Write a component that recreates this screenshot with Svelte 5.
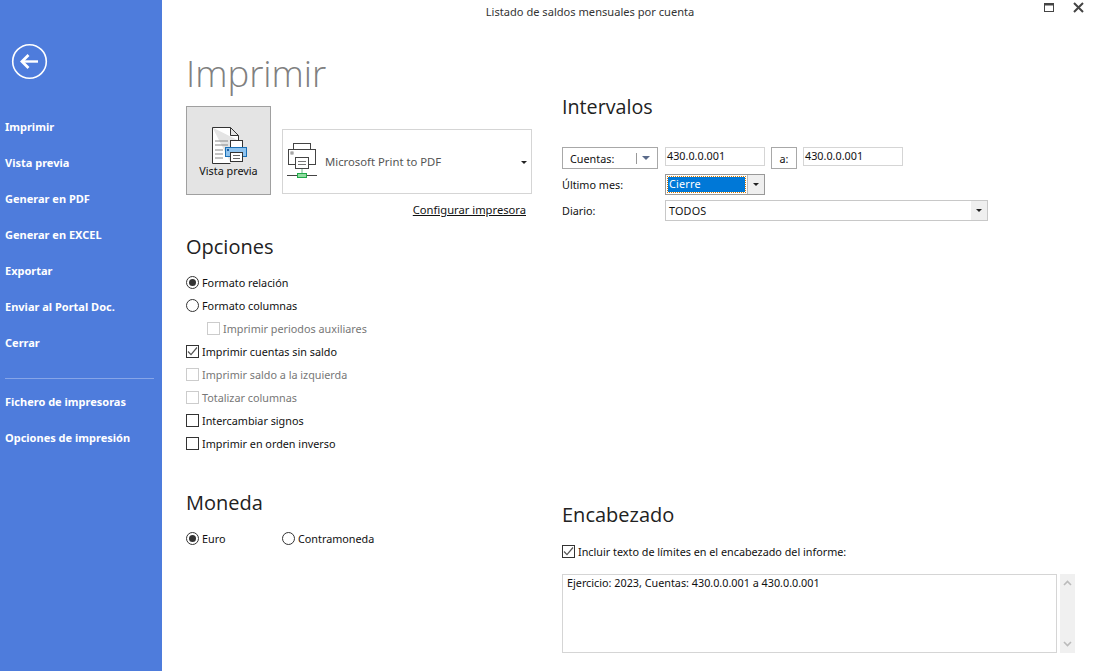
<script lang="ts">
	const menuTop = ['Imprimir', 'Vista previa', 'Generar en PDF', 'Generar en EXCEL', 'Exportar', 'Enviar al Portal Doc.', 'Cerrar'];
	const menuBottom = ['Fichero de impresoras', 'Opciones de impresión'];

	const options = [
		{ type: 'radio', label: 'Formato relación', on: true },
		{ type: 'radio', label: 'Formato columnas' },
		{ type: 'check', label: 'Imprimir periodos auxiliares', off: true, indent: true },
		{ type: 'check', label: 'Imprimir cuentas sin saldo', on: true },
		{ type: 'check', label: 'Imprimir saldo a la izquierda', off: true },
		{ type: 'check', label: 'Totalizar columnas', off: true },
		{ type: 'check', label: 'Intercambiar signos' },
		{ type: 'check', label: 'Imprimir en orden inverso' }
	];
</script>

<div class="window">
	<nav class="sidebar">
		<svg class="back" width="38" height="38" viewBox="0 0 38 38" fill="none" stroke="#fff">
			<circle cx="18.5" cy="18.5" r="16.8" stroke-width="1.6" />
			<path d="M11 18.5h16" stroke-width="2.4" />
			<path d="M17.5 12l-6.5 6.5 6.5 6.5" stroke-width="2.8" />
		</svg>
		<ul class="menu">
			{#each menuTop as item}
				<li>{item}</li>
			{/each}
		</ul>
		<hr />
		<ul class="menu second">
			{#each menuBottom as item}
				<li>{item}</li>
			{/each}
		</ul>
	</nav>

	<main class="content">
		<header class="titlebar">
			<span class="wintitle">Listado de saldos mensuales por cuenta</span>
			<div class="winbtns">
				<svg width="10" height="9" viewBox="0 0 10 9" fill="none">
					<rect x="0.5" y="0.5" width="9" height="8" stroke="#444" />
					<rect x="0" y="0" width="10" height="2.5" fill="#444" />
				</svg>
				<svg width="11" height="11" viewBox="0 0 11 11" fill="none" stroke="#444" stroke-width="2">
					<path d="M1 1l9 9M10 1l-9 9" />
				</svg>
			</div>
		</header>

		<div class="columns">
			<section class="left">
				<h1>Imprimir</h1>
				<div class="printrow">
					<button class="preview">
						<svg width="38" height="38" viewBox="0 0 38 38" fill="none" stroke="#333">
							<path d="M1.5 1.5h18l8 8v5M19.5 1.5v8h8" fill="#fff" />
							<path d="M1.5 1.5v37h19" fill="#fff" stroke="none" />
							<path d="M1.5 1.5v36h18" />
							<path d="M4 15h13M4 19h13M4 24h8M4 28h8M4 32h8" stroke="#888" />
							<rect x="19.5" y="14.5" width="12" height="7" fill="#fff" />
							<rect x="14.5" y="21.5" width="21" height="9" fill="#8fc3ee" stroke="#1a6fb5" />
							<rect x="16" y="23" width="2" height="2" fill="#1a5fa5" stroke="none" />
							<rect x="19.5" y="26.5" width="12" height="9" fill="#fff" />
							<path d="M22 29.5h7M22 32.5h7" stroke="#666" />
						</svg>
						<span>Vista previa</span>
					</button>
					<div class="printer">
						<svg width="32" height="40" viewBox="0 0 32 40" fill="none" stroke="#444">
							<rect x="7.5" y="1.5" width="17" height="6" />
							<rect x="2.5" y="7.5" width="27" height="15" fill="#fff" />
							<rect x="5" y="10" width="2" height="2" stroke="#888" />
							<rect x="9.5" y="15.5" width="13" height="11" fill="#fff" />
							<path d="M12 19.5h8M12 22.5h8" stroke="#777" />
							<path d="M16 27v4" stroke="#6fb98a" />
							<path d="M1 33.5h30" />
							<rect x="11.5" y="31.5" width="9" height="4" fill="#8fdc9f" stroke="#21a84a" />
						</svg>
						<span>Microsoft Print to PDF</span>
						<i class="caret small"></i>
					</div>
				</div>
				<div class="config"><span>Configurar impresora</span></div>

				<h2 class="opciones">Opciones</h2>
				<ul class="options">
					{#each options as o}
						<li class:indent={o.indent} class:off={o.off}>
							{#if o.type === 'radio'}
								<span class="radio" class:on={o.on}></span>
							{:else}
								<span class="check">
									{#if o.on}
										<svg width="11" height="11" viewBox="0 0 11 11" fill="none" stroke="#555" stroke-width="1.2"><path d="M1 5.5l3 3.2 6-7.2" /></svg>
									{/if}
								</span>
							{/if}
							{o.label}
						</li>
					{/each}
				</ul>

				<h2 class="moneda">Moneda</h2>
				<div class="currency">
					<div class="opt euro"><span class="radio on"></span>Euro</div>
					<div class="opt"><span class="radio"></span>Contramoneda</div>
				</div>
			</section>

			<section class="right">
				<h2 class="intervalos">Intervalos</h2>
				<div class="row accounts">
					<div class="btn cuentas"><span>Cuentas:</span><b></b><i class="caret blue"></i></div>
					<div class="field">430.0.0.001</div>
					<div class="btn a">a:</div>
					<div class="field">430.0.0.001</div>
				</div>
				<div class="row month">
					<span class="lbl">Último mes:</span>
					<div class="combo focus">
						<span class="value"><span>Cierre</span></span>
						<span class="arrow"><i class="caret"></i></span>
					</div>
				</div>
				<div class="row diary">
					<span class="lbl">Diario:</span>
					<div class="combo wide">
						<span class="value">TODOS</span>
						<span class="arrow"><i class="caret"></i></span>
					</div>
				</div>

				<h2 class="encabezado">Encabezado</h2>
				<div class="opt include">
					<span class="check">
						<svg width="11" height="11" viewBox="0 0 11 11" fill="none" stroke="#555" stroke-width="1.2"><path d="M1 5.5l3 3.2 6-7.2" /></svg>
					</span>
					Incluir texto de límites en el encabezado del informe:
				</div>
				<div class="memo">
					<div class="memotext">Ejercicio: 2023, Cuentas: 430.0.0.001 a 430.0.0.001</div>
					<div class="scroll">
						<svg width="9" height="6" viewBox="0 0 9 6" fill="none" stroke="#bbb" stroke-width="1.6"><path d="M1 5l3.5-3.5L8 5" /></svg>
						<svg width="9" height="6" viewBox="0 0 9 6" fill="none" stroke="#bbb" stroke-width="1.6"><path d="M1 1l3.5 3.5L8 1" /></svg>
					</div>
				</div>
			</section>
		</div>
	</main>
</div>

<style>
	:global(body) {
		margin: 0;
		background: #fff;
	}

	.window {
		display: flex;
		width: 1094px;
		height: 671px;
		overflow: hidden;
		font-family: 'Noto Sans', 'Open Sans', sans-serif;
		font-size: 10.8px;
		color: #111;
	}

	ul {
		list-style: none;
		margin: 0;
		padding: 0;
	}

	/* Sidebar */
	.sidebar {
		width: 162px;
		flex-shrink: 0;
		background: #4e7cdc;
		color: #fff;
	}

	.back {
		display: block;
		margin: 43px 0 0 11px;
	}

	.menu {
		margin-top: 28px;
	}

	.menu li {
		height: 36px;
		line-height: 36px;
		padding-left: 5px;
		font-weight: 700;
		font-size: 11px;
		white-space: nowrap;
	}

	.sidebar hr {
		border: none;
		border-top: 1px solid #86a5e8;
		margin: 17px 8px 0 5px;
	}

	.menu.second {
		margin-top: 5px;
	}

	/* Content */
	.content {
		flex: 1;
		min-width: 0;
	}

	.titlebar {
		position: relative;
		height: 24px;
		line-height: 24px;
		text-align: center;
		color: #333;
		font-size: 11.1px;
		padding-right: 76px;
	}

	.winbtns {
		position: absolute;
		right: 10px;
		top: 2px;
		display: flex;
		align-items: center;
		gap: 19px;
		height: 11px;
	}

	.columns {
		display: flex;
		padding-left: 24px;
	}

	.left {
		width: 376px;
		flex-shrink: 0;
	}

	h1 {
		margin: 24px 0 0;
		font-size: 36.5px;
		line-height: 50px;
		font-weight: 300;
		color: #808080;
		font-family: 'Open Sans', sans-serif;
	}

	h2 {
		margin: 0;
		font-size: 20px;
		line-height: 28px;
		font-weight: 400;
		color: #222;
		font-family: 'Open Sans', sans-serif;
	}

	.printrow {
		display: flex;
		align-items: flex-end;
		gap: 11px;
		margin-top: 8px;
	}

	.preview {
		width: 85px;
		height: 89px;
		padding: 19px 0 0;
		border: 1px solid #a0a0a0;
		background: #e4e4e4;
		box-sizing: border-box;
		font: inherit;
		color: #111;
		display: flex;
		flex-direction: column;
		align-items: center;
	}

	.preview svg {
		margin-left: 2px;
	}

	.preview span {
		margin-top: -1px;
	}

	.printer {
		position: relative;
		width: 250px;
		height: 65px;
		box-sizing: border-box;
		border: 1px solid #d5d5d5;
		margin-bottom: 1px;
		display: flex;
		align-items: center;
		gap: 7px;
		padding-left: 3px;
		font-size: 11.3px;
		color: #555;
	}

	.printer .caret {
		position: absolute;
		right: 4px;
		top: 31px;
	}

	.caret {
		display: inline-block;
		width: 0;
		height: 0;
		border-left: 3px solid transparent;
		border-right: 3px solid transparent;
		border-top: 3px solid #222;
	}

	.caret.blue {
		border-left-width: 4px;
		border-right-width: 4px;
		border-top: 4px solid #5a6a8a;
	}

	.config {
		width: 340px;
		text-align: right;
		margin-top: 7px;
		line-height: 16px;
		font-size: 11.2px;
	}

	.config span {
		text-decoration: underline;
	}

	.opciones {
		margin-top: 15px;
	}

	.options {
		margin-top: 10px;
	}

	.options li {
		height: 23px;
		display: flex;
		align-items: center;
		gap: 3px;
	}

	.options li.indent {
		padding-left: 21px;
	}

	.options li.off {
		color: #777;
	}

	.radio {
		width: 11px;
		height: 11px;
		border: 1px solid #333;
		border-radius: 50%;
		display: inline-flex;
		align-items: center;
		justify-content: center;
		background: #fff;
		flex-shrink: 0;
	}

	.radio.on::after {
		content: '';
		width: 7px;
		height: 7px;
		border-radius: 50%;
		background: #333;
	}

	.check {
		width: 11px;
		height: 11px;
		border: 1px solid #333;
		background: #fff;
		display: inline-flex;
		align-items: center;
		justify-content: center;
		flex-shrink: 0;
	}

	.off .check {
		border-color: #ccc;
	}

	.moneda {
		margin-top: 34px;
	}

	.currency {
		display: flex;
		margin-top: 10px;
	}

	.opt {
		display: flex;
		align-items: center;
		gap: 3px;
		height: 23px;
	}

	.opt.euro {
		width: 96px;
	}

	/* Right column */
	.right {
		width: 513px;
	}

	.intervalos {
		margin-top: 69px;
		font-size: 19.7px;
	}

	.row {
		display: flex;
		align-items: center;
	}

	.lbl {
		width: 103px;
	}

	.accounts {
		margin-top: 26px;
		height: 22px;
	}

	.btn {
		border: 1px solid #a8a8a8;
		box-sizing: border-box;
		height: 22px;
		display: flex;
		align-items: center;
	}

	.cuentas {
		width: 96px;
		padding-left: 7px;
	}

	.cuentas span {
		width: 66px;
	}

	.cuentas b {
		width: 1px;
		height: 11px;
		background: #999;
		margin-right: 5px;
	}

	.a {
		width: 26px;
		justify-content: center;
		margin: 0 6px;
	}

	.field {
		width: 100px;
		height: 19px;
		box-sizing: border-box;
		border: 1px solid #d5d5d5;
		padding-left: 1px;
		line-height: 15px;
		margin-left: 7px;
		margin-top: -3px;
	}

	.field:last-child {
		margin-left: 0;
	}

	.month {
		margin-top: 5px;
		height: 20px;
	}

	.diary {
		margin-top: 6px;
		height: 20px;
	}

	.combo {
		display: flex;
		width: 100px;
		height: 21px;
		box-sizing: border-box;
		border: 1px solid #c8c8c8;
	}

	.combo.wide {
		width: 323px;
	}

	.combo .value {
		flex: 1;
		padding-left: 3px;
		line-height: 20px;
		letter-spacing: 0.2px;
	}

	.combo .arrow {
		width: 16px;
		background: #efefef;
		display: flex;
		align-items: center;
		justify-content: center;
	}

	.combo.focus {
		border-color: #999;
	}

	.combo.focus .value {
		padding: 2px;
		line-height: 14px;
		border-right: 1px solid #bbb;
	}

	.combo.focus .value span {
		display: block;
		background: #0078d7;
		color: #fff;
		outline: 1px dotted #d97a00;
		padding-left: 1px;
		height: 15px;
	}

	.encabezado {
		margin-top: 281px;
	}

	.include {
		margin-top: 11px;
	}

	.memo {
		display: flex;
		gap: 3px;
		margin-top: 11px;
	}

	.memotext {
		width: 495px;
		height: 79px;
		box-sizing: border-box;
		border: 1px solid #d5d5d5;
		padding: 0 4px;
		line-height: 16px;
	}

	.scroll {
		width: 15px;
		background: #f0f0f0;
		display: flex;
		flex-direction: column;
		align-items: center;
		justify-content: space-between;
		padding: 6px 0;
		box-sizing: border-box;
	}
</style>
